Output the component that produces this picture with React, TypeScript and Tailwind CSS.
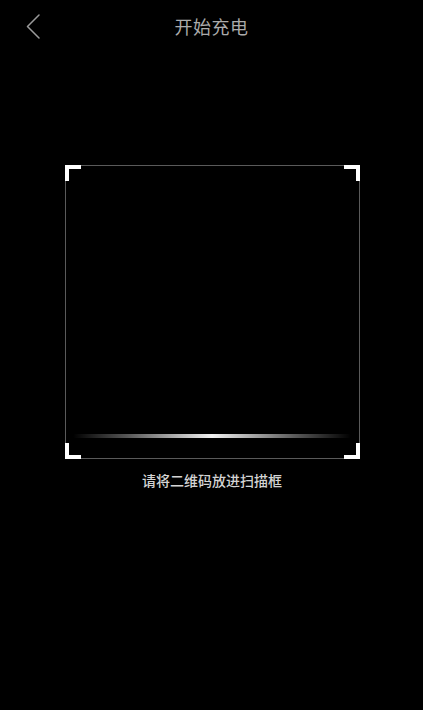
const font = { fontFamily: '"Noto Sans CJK SC", "Noto Sans", sans-serif' }

function Corner({ pos }: { pos: 'tl' | 'tr' | 'bl' | 'br' }) {
  const place = {
    tl: '-top-px -left-px border-t-4 border-l-4',
    tr: '-top-px -right-px border-t-4 border-r-4',
    bl: '-bottom-px -left-px border-b-4 border-l-4',
    br: '-bottom-px -right-px border-b-4 border-r-4',
  }[pos]
  return <div className={`absolute w-[16px] h-[16px] border-white ${place}`} />
}

export default function App() {
  return (
    <div className="w-[423px] h-[710px] bg-black flex flex-col overflow-hidden" style={font}>
      <header className="relative h-[52px] flex items-center justify-center">
        <button className="absolute left-[26px] top-[14px]">
          <svg width="14" height="25" viewBox="0 0 14 25" fill="none">
            <polyline points="13,1 1.5,12.5 13,24" stroke="#9a9a9a" strokeWidth="1.5" strokeLinecap="round" strokeLinejoin="round" />
          </svg>
        </button>
        <h1 className="text-[18px] text-[#ababab] tracking-[0.5px]">开始充电</h1>
      </header>

      <div className="mt-[113px] ml-[65px] w-[295px] h-[294px] relative border border-[#5a5a5a]">
        <Corner pos="tl" />
        <Corner pos="tr" />
        <Corner pos="bl" />
        <Corner pos="br" />
        <div className="absolute left-[7px] right-[8px] top-[268px] h-[4px] rounded-full bg-[linear-gradient(90deg,rgba(255,255,255,0)_0%,rgba(255,255,255,0.35)_20%,rgba(255,255,255,0.95)_50%,rgba(255,255,255,0.35)_80%,rgba(255,255,255,0)_100%)]" />
      </div>

      <p className="mt-[11px] text-center text-[14px] leading-[20px] font-medium text-[#d4d4d4] pl-[1px]">请将二维码放进扫描框</p>
    </div>
  )
}
